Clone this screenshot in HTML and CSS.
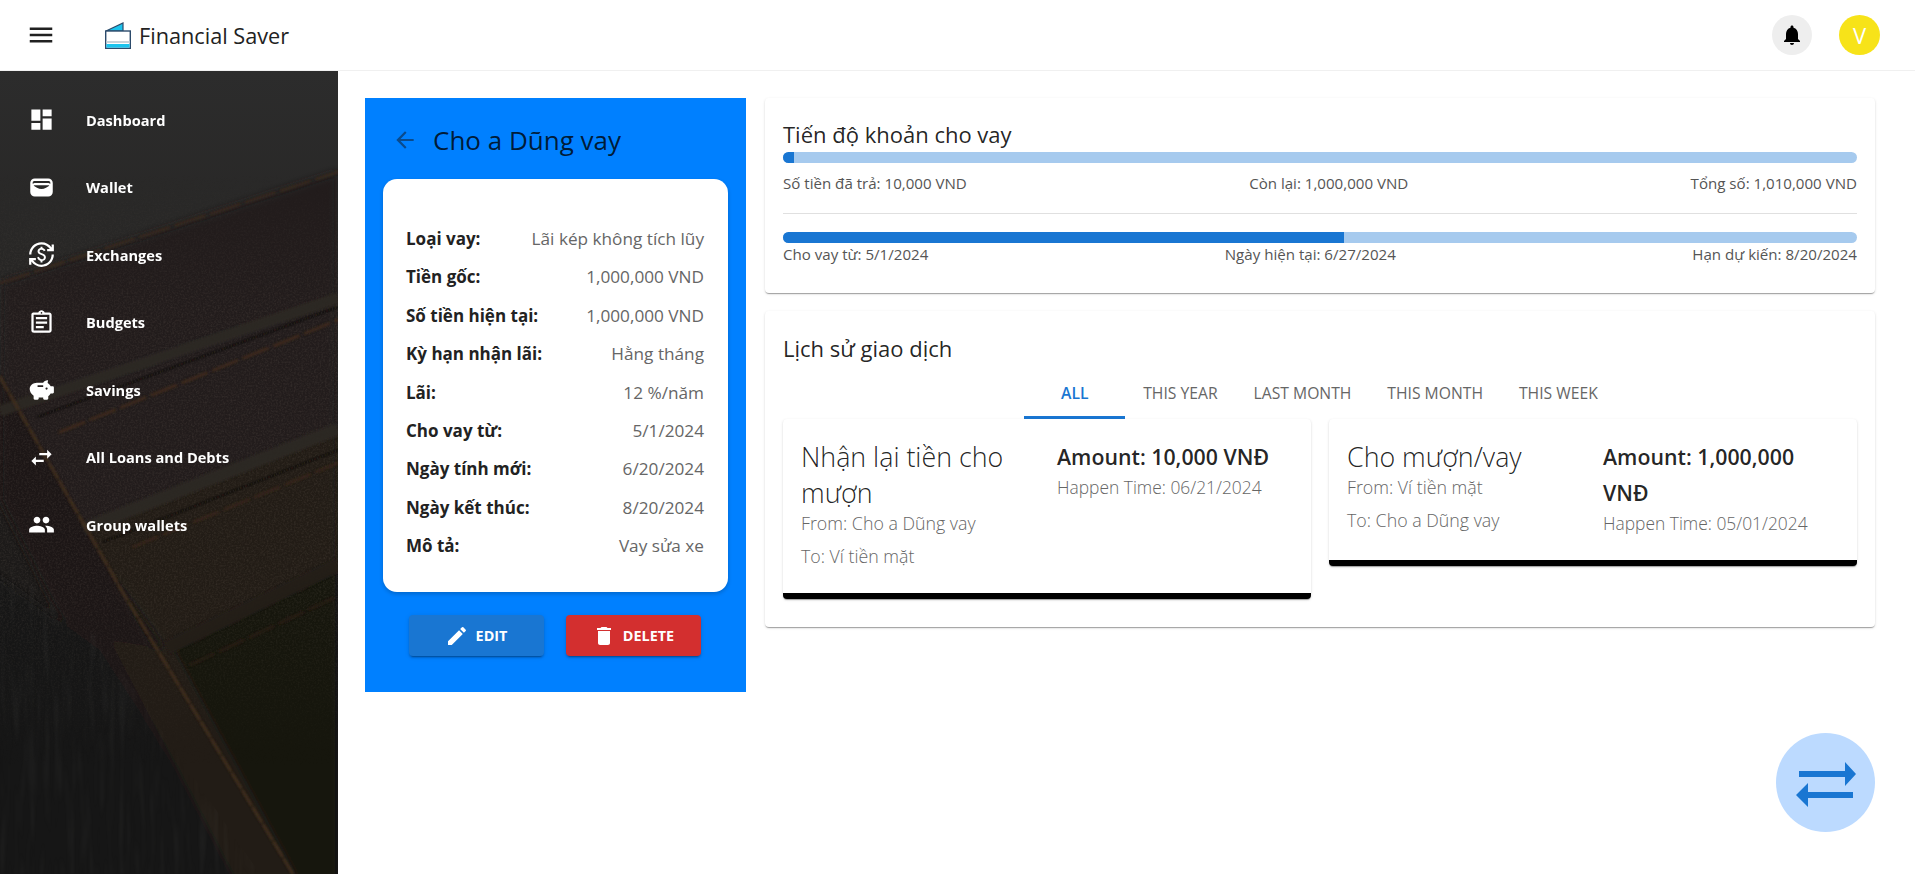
FILE: index.html
```html
<!DOCTYPE html>
<html lang="en">
  <head>
    <meta charset="UTF-8" />
    <meta name="viewport" content="width=device-width, initial-scale=1.0" />
    <link rel="stylesheet" href="styles.css">
    <title>Financial Saver</title>
  </head>
  <body>
    <header class="topbar">
      <button class="menu-btn">
        <svg viewBox="0 0 24 24"><path d="M3 18h18v-2H3v2zm0-5h18v-2H3v2zm0-7v2h18V6H3z"/></svg>
      </button>
      <div class="brand">
        <svg class="brand-logo" viewBox="0 0 26 27">
          <path d="M1 9 L18 1 V9 Z" fill="#1cc4ee" stroke="#2c4a6b" stroke-width="1.2"/>
          <rect x="0.7" y="9" width="24.6" height="17.3" fill="#fff" stroke="#2c4a6b" stroke-width="1.4"/>
          <rect x="1.4" y="19" width="23.2" height="2" fill="#c9d3da"/>
          <rect x="1.4" y="22" width="23.2" height="3.6" fill="#1cc4ee"/>
        </svg>
        <span>Financial Saver</span>
      </div>
      <div class="topbar-right">
        <div class="bell">
          <svg viewBox="0 0 24 24"><path d="M12 22c1.1 0 2-.9 2-2h-4c0 1.1.89 2 2 2zm6-6v-5c0-3.07-1.64-5.64-4.5-6.32V4c0-.83-.67-1.5-1.5-1.5s-1.5.67-1.5 1.5v.68C7.63 5.36 6 7.92 6 11v5l-2 2v1h16v-1l-2-2z"/></svg>
        </div>
        <div class="avatar">V</div>
      </div>
    </header>

    <div class="page">
      <aside class="sidebar">
        <!-- leather background -->
        <svg class="sidebar-bg" viewBox="0 71 338 803" preserveAspectRatio="none">
          <defs>
            <linearGradient id="bgBase" x1="0" y1="0" x2="0" y2="1">
              <stop offset="0" stop-color="#2c2c2c"/>
              <stop offset="0.22" stop-color="#282726"/>
              <stop offset="0.45" stop-color="#1f1d1c"/>
              <stop offset="1" stop-color="#151312"/>
            </linearGradient>
            <linearGradient id="grainFade" x1="0" y1="0" x2="0" y2="1">
              <stop offset="0" stop-color="#fff" stop-opacity="0"/>
              <stop offset="0.2" stop-color="#fff"/>
              <stop offset="0.6" stop-color="#fff"/>
              <stop offset="0.85" stop-color="#fff" stop-opacity="0"/>
            </linearGradient>
            <mask id="grainMask"><rect x="0" y="172" width="338" height="702" fill="url(#grainFade)"/></mask>
            <filter id="grain" x="0" y="0" width="100%" height="100%">
              <feTurbulence type="fractalNoise" baseFrequency="0.55" numOctaves="3" seed="4"/>
              <feColorMatrix values="0 0 0 0 0.42  0 0 0 0 0.34  0 0 0 0 0.27  0 0 0 1.1 -0.42"/>
            </filter>
            <filter id="streaks" x="0" y="0" width="100%" height="100%">
              <feTurbulence type="fractalNoise" baseFrequency="0.2 0.015" numOctaves="2" seed="9"/>
              <feColorMatrix values="0 0 0 0 0.3  0 0 0 0 0.3  0 0 0 0 0.28  0 0 0 0.8 -0.35"/>
              <feGaussianBlur stdDeviation="1"/>
            </filter>
            <filter id="soft" x="-10%" y="-10%" width="120%" height="120%">
              <feGaussianBlur stdDeviation="4"/>
            </filter>
            <filter id="softer" x="-10%" y="-10%" width="120%" height="120%">
              <feGaussianBlur stdDeviation="1.2"/>
            </filter>
            <clipPath id="lowerLeft"><path d="M0 560 L100 640 L260 874 H0 Z"/></clipPath>
          </defs>
          <rect x="0" y="71" width="338" height="803" fill="url(#bgBase)"/>
          <g filter="url(#soft)">
            <path d="M0 283 L338 172 V300 L0 413 Z" fill="#201e1d"/>
            <path d="M0 413 L338 300 V433 L83 533 L40 470 Z" fill="#211d1a"/>
            <path d="M83 533 L338 433 V569 L167 652 Z" fill="#201c18"/>
            <path d="M167 652 L338 569 V880 H293 Z" fill="#161311"/>
            <path d="M0 377 L123 593 L293 880 H225 L50 600 L0 500 Z" fill="#1e1915"/>
            <path d="M-10 570 L100 650 L250 880 H-10 Z" fill="#191917"/>
            <path d="M110 640 L175 650 L300 880 H235 Z" fill="#231b15"/>
          </g>
          <rect clip-path="url(#lowerLeft)" x="0" y="540" width="300" height="334" filter="url(#streaks)" opacity="0.2"/>
          <g mask="url(#grainMask)">
            <rect x="0" y="172" width="338" height="702" filter="url(#grain)" opacity="0.22"/>
          </g>
          <!-- ridges -->
          <g filter="url(#softer)" fill="none">
            <path d="M0 411 L338 298" stroke="#2e2925" stroke-width="11" opacity="0.9"/>
            <path d="M83 529 L338 429" stroke="#2e2925" stroke-width="13" opacity="0.9"/>
            <path d="M167 648 L338 565" stroke="#231d19" stroke-width="14" opacity="0.9"/>
            <path d="M37 417 L338 307" stroke="#0e0c0b" stroke-width="1.6" opacity="0.8"/>
            <path d="M103 542 L338 450" stroke="#0e0c0b" stroke-width="1.6" opacity="0.8"/>
          </g>
          <!-- stitches -->
          <g fill="none" filter="url(#softer)" stroke-linecap="round">
            <path d="M0 283 L338 172" stroke="#3a2a1d" stroke-width="2.2" stroke-dasharray="30 7"/>
            <path d="M60 432 L338 320" stroke="#3f2b1c" stroke-width="2.6" stroke-dasharray="26 7"/>
            <path d="M133 547 L338 463" stroke="#38271a" stroke-width="2.4" stroke-dasharray="26 7"/>
            <path d="M190 665 L338 596" stroke="#291e16" stroke-width="2.4" stroke-dasharray="26 7"/>
            <path d="M0 377 L123 593 L293 874" stroke="#3f2d1e" stroke-width="3" stroke-dasharray="16 4"/>
          </g>
        </svg>

        <nav class="nav">
          <a class="nav-item">
            <svg viewBox="0 0 24 24"><path d="M3 13h8V3H3v10zm0 8h8v-6H3v6zm10 0h8V11h-8v10zm0-18v6h8V3h-8z"/></svg>
            <span>Dashboard</span>
          </a>
          <a class="nav-item">
            <svg viewBox="0 0 24 24"><path fill-rule="evenodd" d="M6 4h12a4 4 0 0 1 4 4v8a4 4 0 0 1-4 4H6a4 4 0 0 1-4-4V8a4 4 0 0 1 4-4zM4.2 7.2v1.6C5 8.3 5.5 8 6.5 8h11c1 0 1.500.3 2.300.8V7.200C19.300 6.500 18.800 6.200 18 6.200H6c-.8 0-1.300.3-1.800 1zM5 10.400l3 1.800c2.500 1.500 5.500 1.500 8 0l3-1.800c-.4-.2-.9-.3-1.400-.3H6.400c-.5 0-1 .1-1.400.3z"/></svg>
            <span>Wallet</span>
          </a>
          <a class="nav-item">
            <svg viewBox="0 0 24 24"><path d="M12.890 11.100c-1.780-.59-2.640-.96-2.640-1.900 0-1.020 1.110-1.390 1.810-1.390 1.310 0 1.790.99 1.900 1.340l1.580-.67c-.15-.44-.82-1.910-2.660-2.230V5h-1.750v1.260c-2.600.56-2.620 2.850-2.620 2.960 0 2.270 2.250 2.910 3.350 3.310 1.580.56 2.280 1.070 2.280 2.030 0 1.130-1.050 1.610-1.980 1.610-1.820 0-2.340-1.870-2.400-2.090l-1.660.67c.63 2.190 2.280 2.780 3.020 2.960V19h1.750v-1.240c.52-.09 3.020-.59 3.020-3.220.01-1.390-.6-2.610-3-3.440zM3 21H1v-6h6v2H4.520c1.610 2.410 4.360 4 7.480 4 4.970 0 9-4.030 9-9h2c0 6.080-4.920 11-11 11-3.720 0-7.010-1.850-9-4.670V21zm-2-9C1 5.920 5.920 1 12 1c3.720 0 7.010 1.850 9 4.670V3h2v6h-6V7h2.480C17.870 4.590 15.120 3 12 3c-4.970 0-9 4.030-9 9H1z"/></svg>
            <span>Exchanges</span>
          </a>
          <a class="nav-item">
            <svg viewBox="0 0 24 24"><path d="M19 3h-4.180C14.400 1.840 13.300 1 12 1s-2.400.84-2.820 2H5c-.14 0-.27.01-.4.04-.39.08-.74.28-1.010.55-.18.18-.33.4-.43.64-.1.23-.16.49-.16.77v14c0 .27.06.54.16.78s.25.45.43.64c.27.27.62.47 1.010.55.13.02.26.03.4.03h14c1.100 0 2-.9 2-2V5c0-1.100-.9-2-2-2zm-7-.25c.41 0 .75.34.75.75s-.34.75-.75.75-.75-.34-.75-.75.34-.75.75-.75zM19 19H5V5h14v14zM7 15h7v2H7zm0-4h10v2H7zm0-4h10v2H7z"/></svg>
            <span>Budgets</span>
          </a>
          <a class="nav-item">
            <svg viewBox="0 0 24 24"><path fill-rule="evenodd" d="M8 6h5.500c.6-1.300 2.200-2.300 3.800-2.300.5 0 .7.4.5.8-.3.5-.4 1.100-.3 1.700 1.200.7 2.100 1.700 2.700 3h1.800c.5 0 1 .4 1 1v4.300c0 .5-.4 1-1 1h-1.900c-.5 1-1.200 1.800-2.100 2.400V20c0 .6-.4 1-1 1h-2.500c-.6 0-1-.4-1-1v-1H9.500v1c0 .6-.4 1-1 1H6c-.6 0-1-.4-1-1v-2.500C2.800 16 1.500 13.700 1.500 11.500 1.500 8.500 4.500 6 8 6zm.5 2.300v1.500h5V8.300zM16.500 10.200a1 1 0 1 0 0 2 1 1 0 0 0 0-2z"/></svg>
            <span>Savings</span>
          </a>
          <a class="nav-item">
            <svg viewBox="0 0 24 24"><path d="M6.990 11 3 15l3.990 4v-3H14v-2H6.990v-3zM21 9l-3.990-4v3H10v2h7.010v3L21 9z"/></svg>
            <span>All Loans and Debts</span>
          </a>
          <a class="nav-item">
            <svg viewBox="0 0 24 24"><path d="M16 11c1.660 0 2.990-1.340 2.990-3S17.660 5 16 5c-1.660 0-3 1.340-3 3s1.340 3 3 3zm-8 0c1.660 0 2.990-1.340 2.990-3S9.660 5 8 5C6.340 5 5 6.340 5 8s1.340 3 3 3zm0 2c-2.330 0-7 1.170-7 3.500V19h14v-2.500c0-2.330-4.670-3.500-7-3.500zm8 0c-.29 0-.62.02-.97.05 1.160.84 1.970 1.970 1.970 3.450V19h6v-2.500c0-2.330-4.670-3.500-7-3.500z"/></svg>
            <span>Group wallets</span>
          </a>
        </nav>
      </aside>

      <main class="content">
        <section class="loan-panel">
          <div class="loan-head">
            <svg class="back-icon" viewBox="0 0 24 24"><path d="M20 11H7.830l5.590-5.590L12 4l-8 8 8 8 1.410-1.410L7.830 13H20v-2z"/></svg>
            <h2>Cho a Dũng vay</h2>
          </div>
          <div class="loan-info">
            <div class="info-row"><b>Loại vay:</b><span>Lãi kép không tích lũy</span></div>
            <div class="info-row"><b>Tiền gốc:</b><span>1,000,000 VND</span></div>
            <div class="info-row"><b>Số tiền hiện tại:</b><span>1,000,000 VND</span></div>
            <div class="info-row"><b>Kỳ hạn nhận lãi:</b><span>Hằng tháng</span></div>
            <div class="info-row"><b>Lãi:</b><span>12 %/năm</span></div>
            <div class="info-row"><b>Cho vay từ:</b><span>5/1/2024</span></div>
            <div class="info-row"><b>Ngày tính mới:</b><span>6/20/2024</span></div>
            <div class="info-row"><b>Ngày kết thúc:</b><span>8/20/2024</span></div>
            <div class="info-row"><b>Mô tả:</b><span>Vay sửa xe</span></div>
          </div>
          <div class="loan-actions">
            <button class="btn btn-edit">
              <svg viewBox="0 0 24 24"><path d="M3 17.250V21h3.750L17.810 9.940l-3.750-3.750L3 17.250zM20.710 7.040c.39-.39.39-1.020 0-1.410l-2.340-2.340a.996.996 0 0 0-1.410 0l-1.830 1.830 3.750 3.750 1.830-1.830z"/></svg>
              Edit
            </button>
            <button class="btn btn-delete">
              <svg viewBox="0 0 24 24"><path d="M6 19c0 1.100.9 2 2 2h8c1.100 0 2-.9 2-2V7H6v12zM19 4h-3.500l-1-1h-5l-1 1H5v2h14V4z"/></svg>
              Delete
            </button>
          </div>
        </section>

        <div class="right-col">
          <section class="card progress-card">
            <h3>Tiến độ khoản cho vay</h3>
            <div class="bar"><div class="bar-fill" style="width: 1%"></div></div>
            <div class="bar-labels first">
              <span>Số tiền đã trả: 10,000 VND</span>
              <span>Còn lại: 1,000,000 VND</span>
              <span>Tổng số: 1,010,000 VND</span>
            </div>
            <hr class="divider" />
            <div class="bar"><div class="bar-fill" style="width: 52.2%"></div></div>
            <div class="bar-labels">
              <span>Cho vay từ: 5/1/2024</span>
              <span>Ngày hiện tại: 6/27/2024</span>
              <span>Hạn dự kiến: 8/20/2024</span>
            </div>
          </section>

          <section class="card history-card">
            <h3>Lịch sử giao dịch</h3>
            <div class="tabs">
              <div class="tab active">All</div>
              <div class="tab">This year</div>
              <div class="tab">Last month</div>
              <div class="tab">This month</div>
              <div class="tab">This week</div>
            </div>
            <div class="tx-list">
              <div class="tx-card">
                <div>
                  <div class="tx-title">Nhận lại tiền cho mượn</div>
                  <div class="tx-sub">From: Cho a Dũng vay</div>
                  <div class="tx-sub">To: Ví tiền mặt</div>
                </div>
                <div>
                  <div class="tx-amount">Amount: 10,000 VNĐ</div>
                  <div class="tx-time">Happen Time: 06/21/2024</div>
                </div>
              </div>
              <div class="tx-card">
                <div>
                  <div class="tx-title">Cho mượn/vay</div>
                  <div class="tx-sub">From: Ví tiền mặt</div>
                  <div class="tx-sub">To: Cho a Dũng vay</div>
                </div>
                <div>
                  <div class="tx-amount">Amount: 1,000,000 VNĐ</div>
                  <div class="tx-time">Happen Time: 05/01/2024</div>
                </div>
              </div>
            </div>
          </section>
        </div>
      </main>
    </div>

    <button class="fab">
      <svg viewBox="0 0 60 48"><path d="M3 12h46V3l11 12-11 12v-9H3z M57 33H12v-9L0 36l12 12v-9h45z"/></svg>
    </button>
  </body>
</html>
```

FILE: styles.css
```css
* {
  box-sizing: border-box;
}
html,
body {
  height: 100%;
}
body {
  margin: 0;
  background: #fff;
  color: rgba(0, 0, 0, 0.87);
  font-family: 'Open Sans', 'Noto Sans', sans-serif;
  overflow: hidden;
}
h2,
h3 {
  margin: 0;
  font-weight: 400;
}
svg {
  fill: currentColor;
  display: block;
}

/* top bar */
.topbar {
  height: 71px;
  display: flex;
  align-items: center;
  padding: 0 35px 0 26px;
  border-bottom: 1px solid #f0f0f0;
}
.menu-btn {
  width: 30px;
  height: 30px;
  padding: 0;
  border: none;
  background: none;
  color: rgba(0, 0, 0, 0.87);
}
.brand {
  display: flex;
  align-items: center;
  margin-left: 49px;
  font-size: 21.7px;
  color: #222;
}
.brand-logo {
  width: 26px;
  height: 27px;
  margin-right: 8px;
}
.topbar-right {
  margin-left: auto;
  display: flex;
  align-items: center;
  gap: 27px;
}
.bell {
  width: 40px;
  height: 40px;
  border-radius: 50%;
  background: #eeeeee;
  display: flex;
  align-items: center;
  justify-content: center;
  color: #000;
}
.bell svg {
  width: 24px;
  height: 24px;
}
.avatar {
  width: 41px;
  height: 40px;
  border-radius: 50%;
  background: #f7e319;
  color: #fff;
  font-size: 22px;
  display: flex;
  align-items: center;
  justify-content: center;
}

/* page */
.page {
  display: flex;
  height: calc(100% - 71px);
}
.sidebar {
  position: relative;
  width: 338px;
  flex: none;
  overflow: hidden;
  background: #1d1b1a;
}
.sidebar-bg {
  position: absolute;
  top: 0;
  left: 0;
  width: 100%;
  height: 100%;
}
.nav {
  position: relative;
  padding-top: 15px;
}
.nav-item {
  height: 67.5px;
  display: flex;
  align-items: center;
  padding-left: 28px;
  color: #fff;
  font-size: 14.6px;
  font-weight: 700;
}
.nav-item svg {
  width: 27px;
  height: 27px;
  margin-right: 31px;
}

.content {
  flex: 1;
  display: flex;
  align-items: flex-start;
  gap: 19px;
  padding: 27px 40px 0 27px;
}

/* loan panel */
.loan-panel {
  width: 381px;
  height: 594px;
  flex: none;
  background: #0080ff;
  padding: 0 18px;
}
.loan-head {
  height: 81px;
  display: flex;
  align-items: center;
  padding: 2px 0 0 9px;
}
.back-icon {
  width: 26px;
  height: 26px;
  color: #0a4a8c;
  margin-right: 15px;
}
.loan-head h2 {
  font-size: 26px;
  color: rgba(0, 0, 0, 0.8);
}
.loan-info {
  height: 413px;
  background: #fff;
  border-radius: 14px;
  padding: 41px 24px 0 23px;
  box-shadow: 0 2px 4px rgba(0, 0, 0, 0.2);
}
.info-row {
  display: flex;
  justify-content: space-between;
  height: 38.4px;
  line-height: 38.4px;
  font-size: 17.2px;
}
.info-row b {
  font-size: 17px;
  font-weight: 700;
  color: #222;
}
.info-row span {
  color: #666;
}
.loan-actions {
  display: flex;
  justify-content: center;
  gap: 22px;
  margin-top: 23px;
  padding-right: 2px;
}
.btn {
  width: 135px;
  height: 41px;
  border: none;
  border-radius: 4px;
  color: #fff;
  font-family: inherit;
  font-size: 14.4px;
  font-weight: 700;
  text-transform: uppercase;
  display: flex;
  align-items: center;
  justify-content: center;
  gap: 7px;
  box-shadow: 0 3px 1px -2px rgba(0, 0, 0, 0.2), 0 2px 2px rgba(0, 0, 0, 0.14), 0 1px 5px rgba(0, 0, 0, 0.12);
}
.btn svg {
  width: 24px;
  height: 24px;
}
.btn-edit {
  background: #1976d2;
}
.btn-delete {
  background: #d32f2f;
}

/* right column */
.right-col {
  flex: 1;
  display: flex;
  flex-direction: column;
  gap: 18px;
}
.card {
  background: #fff;
  border-radius: 4px;
  padding: 0 18px;
  box-shadow: 0 2px 1px -1px rgba(0, 0, 0, 0.2), 0 1px 1px rgba(0, 0, 0, 0.14), 0 1px 3px rgba(0, 0, 0, 0.12);
}
.card h3 {
  font-size: 22px;
}
.progress-card {
  height: 195px;
  padding-top: 22px;
}
.progress-card h3 {
  line-height: 28px;
  margin-bottom: 4px;
}
.bar {
  height: 11px;
  border-radius: 6px;
  background: #a6caee;
  overflow: hidden;
}
.bar-fill {
  height: 100%;
  background: #1976d2;
}
.bar-labels {
  display: flex;
  justify-content: space-between;
  font-size: 15.1px;
  line-height: 21px;
  margin-top: 1px;
  color: #555;
}
.bar-labels.first {
  margin-top: 10px;
}
.divider {
  border: none;
  border-top: 1px solid #e0e0e0;
  margin: 19px 0 18px;
}

.history-card {
  height: 316px;
  padding-top: 23px;
}
.history-card h3 {
  line-height: 28px;
}
.tabs {
  display: flex;
  justify-content: center;
  margin-top: 9px;
}
.tab {
  height: 48px;
  min-width: 101px;
  padding: 0 18px;
  line-height: 45px;
  text-align: center;
  font-size: 15.7px;
  font-weight: 500;
  text-transform: uppercase;
  color: #666;
}
.tab.active {
  color: #1976d2;
  font-weight: 600;
  border-bottom: 3px solid #1976d2;
}
.tx-list {
  display: flex;
  align-items: flex-start;
  gap: 18px;
}
.tx-card {
  flex: 1;
  display: grid;
  grid-template-columns: 256px 1fr;
  padding: 20px 18px 20px;
  background: #fff;
  border-bottom: 6px solid #000;
  border-radius: 4px;
  box-shadow: 0 2px 1px -1px rgba(0, 0, 0, 0.2), 0 1px 1px rgba(0, 0, 0, 0.14), 0 1px 3px rgba(0, 0, 0, 0.12);
}
.tx-title {
  font-size: 26.8px;
  font-weight: 300;
  line-height: 36px;
  padding-right: 20px;
  margin-bottom: -4.5px;
}
.tx-sub {
  font-size: 17.8px;
  font-weight: 300;
  line-height: 33px;
  color: #666;
}
.tx-amount {
  font-size: 21.3px;
  font-weight: 600;
  line-height: 36px;
  margin-bottom: -4.5px;
}
.tx-time {
  font-size: 17.4px;
  font-weight: 300;
  line-height: 33px;
  color: #666;
}

/* floating button */
.fab {
  position: fixed;
  right: 40px;
  bottom: 42px;
  width: 99px;
  height: 99px;
  border: none;
  border-radius: 50%;
  background: #bcdaff;
  color: #1976d2;
  display: flex;
  align-items: center;
  justify-content: center;
  padding: 0;
}
.fab svg {
  width: 60px;
  height: 48px;
}
```
